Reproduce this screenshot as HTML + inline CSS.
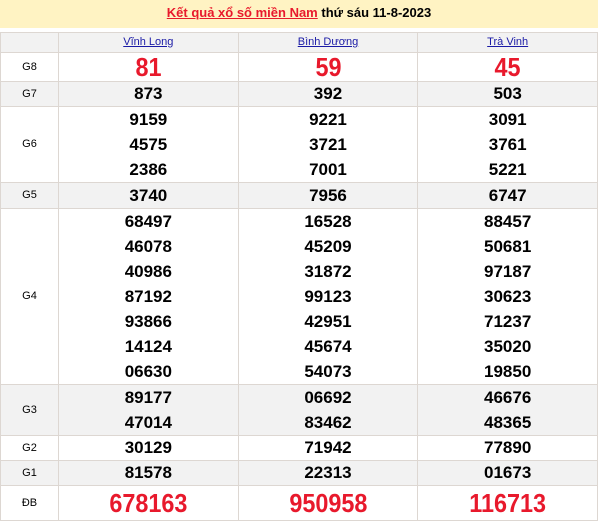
<!DOCTYPE html><html><head><meta charset="utf-8"><style>
body{margin:0;background:#fff;font-family:"Liberation Sans",Arial,sans-serif}
.h{position:absolute;left:0;top:0;width:598px;height:28px;background:#fff3c3;text-align:center;font-size:13px;font-weight:bold;line-height:26px}
.h a{color:#e8192c;text-decoration:underline}
table{position:absolute;left:0;top:32px;width:598px;border-collapse:collapse;table-layout:fixed}
td{border:1px solid #ddd7d2;text-align:center;padding:0;font-weight:bold;font-size:17px;line-height:25px;color:#000}
td.l{font-weight:normal;font-size:11px}
tr.s td{line-height:24px}
tr.g td{background:#f2f2f2}
.hd td{height:19px;font-size:11px;font-weight:normal;line-height:17px}
.hd a{color:#1a1aa6;text-decoration:underline}
.r{color:#e8192c;font-size:26px;line-height:28px}
.r span,.db span{display:inline-block;transform:scaleX(.9)}
.db{color:#e8192c;font-size:26px;line-height:34px}
</style></head><body>
<div class="h"><a>Kết quả xổ số miền Nam</a> thứ sáu 11-8-2023</div>
<table>
<colgroup><col style="width:58px"><col><col><col></colgroup>
<tr class="g hd"><td></td><td><a>Vĩnh Long</a></td><td><a>Bình Dương</a></td><td><a>Trà Vinh</a></td></tr>
<tr><td class="l">G8</td><td class="r"><span>81</span></td><td class="r"><span>59</span></td><td class="r"><span>45</span></td></tr>
<tr class="g s"><td class="l">G7</td><td>873</td><td>392</td><td>503</td></tr>
<tr><td class="l">G6</td><td>9159<br>4575<br>2386</td><td>9221<br>3721<br>7001</td><td>3091<br>3761<br>5221</td></tr>
<tr class="g"><td class="l">G5</td><td>3740</td><td>7956</td><td>6747</td></tr>
<tr><td class="l">G4</td><td>68497<br>46078<br>40986<br>87192<br>93866<br>14124<br>06630</td><td>16528<br>45209<br>31872<br>99123<br>42951<br>45674<br>54073</td><td>88457<br>50681<br>97187<br>30623<br>71237<br>35020<br>19850</td></tr>
<tr class="g"><td class="l">G3</td><td>89177<br>47014</td><td>06692<br>83462</td><td>46676<br>48365</td></tr>
<tr class="s"><td class="l">G2</td><td>30129</td><td>71942</td><td>77890</td></tr>
<tr class="g s"><td class="l">G1</td><td>81578</td><td>22313</td><td>01673</td></tr>
<tr><td class="l">ĐB</td><td class="db"><span>678163</span></td><td class="db"><span>950958</span></td><td class="db"><span>116713</span></td></tr>
</table>
</body></html>
